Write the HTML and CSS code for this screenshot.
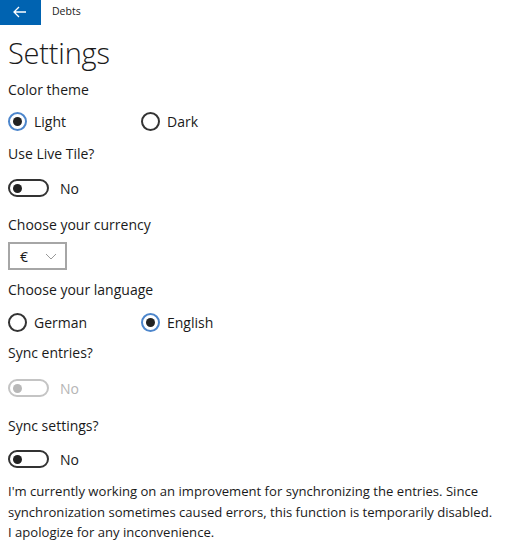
FILE: index.html
```html
<!DOCTYPE html>
<html>
<head>
<meta charset="utf-8">
<link rel="stylesheet" href="styles.css">
</head>
<body>
<header class="topbar">
  <div class="back">
    <svg width="14" height="12" viewBox="0 0 14 12"><path d="M6 1 L1 6 L6 11 M1 6 H13" fill="none" stroke="#fff" stroke-width="1.3"/></svg>
  </div>
  <span class="apptitle">Debts</span>
</header>
<main class="content">
  <h1 class="title">Settings</h1>

  <div class="label g-color">Color theme</div>
  <div class="radios g-row1">
    <div class="radio"><span class="circle on"></span><span>Light</span></div>
    <div class="radio"><span class="circle"></span><span>Dark</span></div>
  </div>

  <div class="label g-tile">Use Live Tile?</div>
  <div class="toggle-row g-t1"><span class="toggle"><span class="knob"></span></span><span>No</span></div>

  <div class="label g-cur">Choose your currency</div>
  <div class="select g-sel"><span>€</span>
    <svg width="12" height="7" viewBox="0 0 12 7"><path d="M1 1 L6 6 L11 1" fill="none" stroke="#999" stroke-width="1"/></svg>
  </div>

  <div class="label g-lang">Choose your language</div>
  <div class="radios g-row2">
    <div class="radio"><span class="circle"></span><span>German</span></div>
    <div class="radio"><span class="circle on"></span><span>English</span></div>
  </div>

  <div class="label g-se">Sync entries?</div>
  <div class="toggle-row disabled g-t2"><span class="toggle"><span class="knob"></span></span><span>No</span></div>

  <div class="label g-ss">Sync settings?</div>
  <div class="toggle-row g-t3"><span class="toggle"><span class="knob"></span></span><span>No</span></div>

  <p class="note">I'm currently working on an improvement for synchronizing the entries. Since synchronization sometimes caused errors, this function is temporarily disabled. I apologize for any inconvenience.</p>
</main>
</body>
</html>
```

FILE: styles.css
```css
html, body { margin: 0; padding: 0; background: #fff; }
body {
  font-family: "Open Sans", "Noto Sans", sans-serif;
  color: #1a1a1a;
  font-size: 14px;
  width: 521px;
  height: 550px;
  overflow: hidden;
}
.topbar { display: flex; align-items: center; height: 25px; }
.back {
  width: 41px; height: 25px; background: #0063b1;
  display: flex; align-items: center; justify-content: center;
  margin-right: 11px;
}
.back svg { margin-top: -2px; margin-left: -2px; }
.apptitle { font-size: 10.5px; margin-top: -3px; }
.content { display: flex; flex-direction: column; padding-left: 8px; }
.title {
  margin: 11px 0 0 0; font-weight: 300; font-size: 29px; line-height: 33px; height: 33px;
  letter-spacing: -0.2px;
}
.label { line-height: 20px; height: 20px; }
.radios { display: flex; height: 20px; align-items: center; }
.radio { display: flex; align-items: center; width: 133px; }
.circle {
  box-sizing: border-box; width: 19px; height: 19px; border-radius: 50%;
  border: 2px solid #333; margin-right: 7px; position: relative; flex: none;
}
.circle.on { border-color: #4d86cc; }
.circle.on::after {
  content: ""; position: absolute; left: 3px; top: 3px; width: 9px; height: 9px;
  border-radius: 50%; background: #222;
}
.toggle-row { display: flex; align-items: center; height: 20px; }
.toggle {
  box-sizing: border-box; width: 41px; height: 18px; border: 2px solid #333;
  border-radius: 9px; margin-right: 11px; display: flex; align-items: center; padding-left: 3px;
}
.knob { width: 9px; height: 9px; border-radius: 50%; background: #222; }
.disabled { color: #b5b5b5; }
.disabled .toggle { border-color: #c4c4c4; }
.disabled .knob { background: #b8b8b8; }
.select {
  box-sizing: border-box; width: 59px; height: 28px; border: 2px solid #a6a6a6;
  display: flex; align-items: center; justify-content: space-between; padding: 0 8px 0 10px;
}
.g-color { margin-top: 11px; }
.g-row1 { margin-top: 11px; }
.g-tile { margin-top: 13px; }
.g-t1 { margin-top: 14px; }
.g-cur { margin-top: 17px; }
.g-sel { margin-top: 7px; }
.g-lang { margin-top: 10px; }
.g-row2 { margin-top: 12px; }
.g-se { margin-top: 11px; }
.g-t2 { margin-top: 15px; }
.g-ss { margin-top: 18px; }
.g-t3 { margin-top: 13px; }
.note { margin: 12px 0 0 0; line-height: 20.5px; width: 485px; font-size: 13.1px; }
```
